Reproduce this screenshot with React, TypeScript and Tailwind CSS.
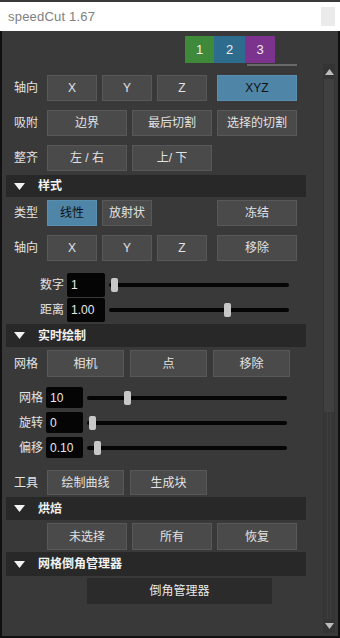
const FONT = { fontFamily: '"Liberation Sans", "Noto Sans CJK SC", sans-serif' };

function Btn({
  label,
  w = 'w-[50px]',
  active = false,
  className = '',
}: {
  label: string;
  w?: string;
  active?: boolean;
  className?: string;
}) {
  return (
    <div
      className={`${w} flex h-full items-center justify-center border text-[12px] ${
        active
          ? 'border-[#5a8fb0] bg-[#4f86a8] text-[#111]'
          : 'border-[#585858] bg-[#4a4a4a] text-[#e2e2e2]'
      } ${className}`}
    >
      {label}
    </div>
  );
}

function Header({ label, mt, h }: { label: string; mt: string; h: string }) {
  return (
    <div className={`${mt} ${h} ml-[4px] flex w-[300px] items-center bg-[#282828]`}>
      <svg width="11" height="7" viewBox="0 0 11 7" className="ml-[8px]">
        <polygon points="0,0 11,0 5.5,7" fill="#f2f2f2" />
      </svg>
      <span className="ml-[13px] text-[12px] font-bold text-[#f2f2f2]">{label}</span>
    </div>
  );
}

function Slider({
  label,
  value,
  thumb,
  labelW,
  inputW,
  trackW,
  mt,
  h,
}: {
  label: string;
  value: string;
  thumb: number;
  labelW: string;
  inputW: string;
  trackW: string;
  mt: string;
  h: string;
}) {
  return (
    <div className={`${mt} ${h} flex items-center`}>
      <div className={`${labelW} pr-[3px] text-right text-[12px] text-[#e2e2e2]`}>{label}</div>
      <div className={`${inputW} flex h-full items-center rounded-[2px] bg-[#050505] pl-[4px] text-[12px] text-[#e8e8e8]`}>
        {value}
      </div>
      <div className={`${trackW} relative ml-[4px] h-[4px] rounded-full bg-[#050505]`}>
        <div
          className="absolute top-[-5px] h-[14px] w-[7px] rounded-[2px] bg-[#c8c8c8]"
          style={{ left: thumb }}
        />
      </div>
    </div>
  );
}

export default function App() {
  return (
    <div className="flex h-[638px] w-[340px] flex-col bg-[#2a2a2a]" style={FONT}>
      <div className="h-[2px] bg-[#3a3a3a]" />
      <div className="flex h-[29px] items-center bg-white">
        <span className="ml-[8px] text-[13px] tracking-[0.2px] text-[#808080]">speedCut 1.67</span>
        <div className="ml-auto mr-[5px] h-[19px] w-[14px] bg-[#ebebeb]" />
      </div>
      <div className="flex min-h-0 flex-1 border-x-2 border-b-2 border-[#111] bg-[#393939]">
        <div className="flex w-[320px] flex-col">
          <div className="mt-[5px] flex h-[27px] pl-[183px] text-[13px] text-[#eee]">
            <div className="flex w-[29px] items-center justify-center bg-[#3f8a3a]">1</div>
            <div className="flex w-[31px] items-center justify-center bg-[#2e6c8e]">2</div>
            <div className="flex w-[30px] items-center justify-center bg-[#7c338e]">3</div>
          </div>
          <div className="ml-[245px] mt-[1px] h-[2px] w-[50px] bg-[#6a6a6a]" />

          <div className="mt-[9px] flex h-[26px] items-center">
            <div className="w-[45px] pl-[12px] text-[12px] text-[#e2e2e2]">轴向</div>
            <div className="flex h-full gap-[5px]">
              <Btn label="X" />
              <Btn label="Y" />
              <Btn label="Z" />
            </div>
            <Btn label="XYZ" w="w-[80px]" active className="ml-[10px]" />
          </div>

          <div className="mt-[9px] flex h-[26px] items-center">
            <div className="w-[45px] pl-[12px] text-[12px] text-[#e2e2e2]">吸附</div>
            <div className="flex h-full gap-[5px]">
              <Btn label="边界" w="w-[80px]" />
              <Btn label="最后切割" w="w-[80px]" />
              <Btn label="选择的切割" w="w-[80px]" />
            </div>
          </div>

          <div className="mt-[9px] flex h-[26px] items-center">
            <div className="w-[45px] pl-[12px] text-[12px] text-[#e2e2e2]">整齐</div>
            <div className="flex h-full gap-[5px]">
              <Btn label="左 / 右" w="w-[80px]" />
              <Btn label="上/ 下" w="w-[80px]" />
            </div>
          </div>

          <Header label="样式" mt="mt-[4px]" h="h-[22px]" />

          <div className="mt-[3px] flex h-[26px] items-center">
            <div className="w-[45px] pl-[12px] text-[12px] text-[#e2e2e2]">类型</div>
            <div className="flex h-full gap-[5px]">
              <Btn label="线性" active />
              <Btn label="放射状" />
            </div>
            <Btn label="冻结" w="w-[80px]" className="ml-[65px]" />
          </div>

          <div className="mt-[9px] flex h-[26px] items-center">
            <div className="w-[45px] pl-[12px] text-[12px] text-[#e2e2e2]">轴向</div>
            <div className="flex h-full gap-[5px]">
              <Btn label="X" />
              <Btn label="Y" />
              <Btn label="Z" />
            </div>
            <Btn label="移除" w="w-[80px]" className="ml-[10px]" />
          </div>

          <Slider label="数字" value="1" thumb={2} labelW="w-[65px]" inputW="w-[38px]" trackW="w-[180px]" mt="mt-[12px]" h="h-[24px]" />
          <Slider label="距离" value="1.00" thumb={115} labelW="w-[65px]" inputW="w-[38px]" trackW="w-[180px]" mt="mt-[1px]" h="h-[24px]" />

          <Header label="实时绘制" mt="mt-[2px]" h="h-[23px]" />

          <div className="mt-[3px] flex h-[27px] items-center">
            <div className="w-[45px] pl-[12px] text-[12px] text-[#e2e2e2]">网格</div>
            <div className="flex h-full gap-[6px]">
              <Btn label="相机" w="w-[77px]" />
              <Btn label="点" w="w-[77px]" />
              <Btn label="移除" w="w-[77px]" />
            </div>
          </div>

          <Slider label="网格" value="10" thumb={37} labelW="w-[44px]" inputW="w-[37px]" trackW="w-[200px]" mt="mt-[10px]" h="h-[21px]" />
          <Slider label="旋转" value="0" thumb={2} labelW="w-[44px]" inputW="w-[37px]" trackW="w-[200px]" mt="mt-[4px]" h="h-[21px]" />
          <Slider label="偏移" value="0.10" thumb={7} labelW="w-[44px]" inputW="w-[37px]" trackW="w-[200px]" mt="mt-[4px]" h="h-[21px]" />

          <div className="mt-[12px] flex h-[25px] items-center">
            <div className="w-[45px] pl-[12px] text-[12px] text-[#e2e2e2]">工具</div>
            <div className="flex h-full gap-[6px]">
              <Btn label="绘制曲线" w="w-[77px]" />
              <Btn label="生成块" w="w-[77px]" />
            </div>
          </div>

          <Header label="烘焙" mt="mt-[2px]" h="h-[23px]" />

          <div className="mt-[3px] flex h-[27px] items-center pl-[45px]">
            <div className="flex h-full gap-[5px]">
              <Btn label="未选择" w="w-[80px]" />
              <Btn label="所有" w="w-[80px]" />
              <Btn label="恢复" w="w-[80px]" />
            </div>
          </div>

          <Header label="网格倒角管理器" mt="mt-[2px]" h="h-[24px]" />

          <div className="ml-[85px] mt-[2px] flex h-[26px] w-[185px] items-center justify-center bg-[#2b2b2b] text-[12px] text-[#e8e8e8]">
            倒角管理器
          </div>
        </div>

        <div className="mt-[33px] mb-[3px] ml-[1px] flex w-[12px] flex-col items-center bg-[#343434]">
          <svg width="9" height="6" viewBox="0 0 9 6" className="mt-[5px]">
            <polygon points="4.5,0 9,6 0,6" fill="#bdbdbd" />
          </svg>
          <div className="mt-[4px] h-[333px] w-[10px] bg-[#404040]" />
          <div className="flex w-[10px] flex-1 justify-center gap-[2px] bg-[#363636]">
            <div className="w-px bg-[#3e3e3e]" />
            <div className="w-px bg-[#3e3e3e]" />
          </div>
          <svg width="9" height="6" viewBox="0 0 9 6" className="my-[4px]">
            <polygon points="0,0 9,0 4.5,6" fill="#bdbdbd" />
          </svg>
        </div>
      </div>
    </div>
  );
}
